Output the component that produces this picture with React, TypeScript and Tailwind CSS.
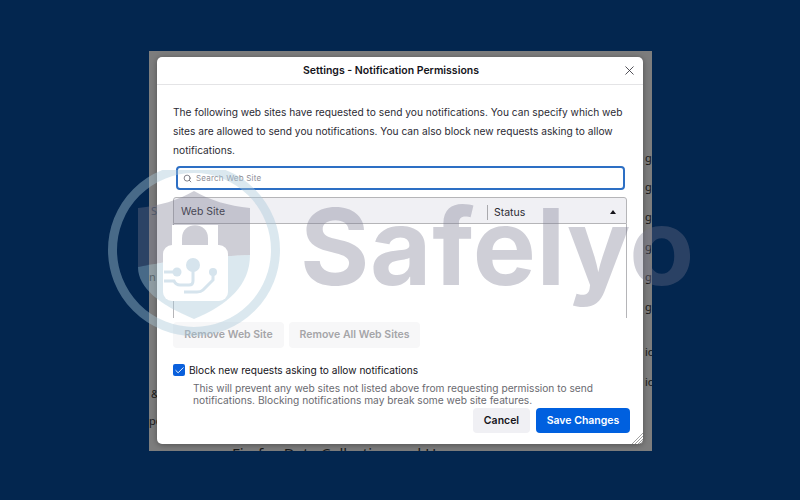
import { Check, Search, X } from "lucide-react";

const font = "font-['Inter','Noto_Sans',sans-serif]";

// clipped words of the page behind the dialog
const rightScraps = [
  { label: "g", y: "top-[100px]" },
  { label: "g", y: "top-[129px]" },
  { label: "g", y: "top-[159px]" },
  { label: "g", y: "top-[189px]" },
  { label: "g", y: "top-[219px]" },
  { label: "g", y: "top-[249px]" },
  { label: "io", y: "top-[294px]" },
  { label: "io", y: "top-[324px]" },
];

function BackdropText() {
  return (
    <div className="absolute inset-0 overflow-hidden text-[11px] leading-[14px] text-[#1a1a1a]">
      <span className="absolute left-[2px] top-[153px] text-[#3a4a5c]">S</span>
      <span className="absolute left-[0px] top-[219px]">n</span>
      <span className="absolute left-[2px] top-[336px]">&amp;</span>
      <span className="absolute left-[0px] top-[363px]">po</span>
      {rightScraps.map((s, i) => (
        <span key={i} className={`absolute left-[496px] ${s.y}`}>
          {s.label}
        </span>
      ))}
      <span className="absolute left-[83px] top-[393px] text-[15px] leading-[18px] whitespace-nowrap">
        Firefox Data Collection and Use
      </span>
    </div>
  );
}

function Watermark() {
  return (
    <div className="absolute inset-0 pointer-events-none overflow-hidden">
      <svg className="absolute left-[100px] top-[170px]" width="200" height="180" viewBox="0 0 200 180" fill="none">
        <circle cx="94" cy="80" r="81.5" stroke="#a9c8da" strokeOpacity="0.42" strokeWidth="9" />
        {/* shield, upper half */}
        <path d="M38 38 C60 36 78 30 94 21 C110 30 128 36 150 38 V85 C120 86 70 90 38 97 Z" fill="#76768c" fillOpacity="0.36" />
        {/* shield, lower half */}
        <path d="M38 97 C70 90 120 86 150 85 C150 115 128 135 94 149 C60 135 38 118 38 97 Z" fill="#a9c8da" fillOpacity="0.42" />
        {/* lock */}
        <path d="M72 77 V55 H118 V77 Z" fill="#ffffff" />
        <path d="M82 76 V68 C82 51 108 51 108 68 V76 Z" fill="#76768c" fillOpacity="0.36" />
        <rect x="63" y="75" width="65" height="56" rx="9" fill="#ffffff" />
        {/* circuit */}
        <circle cx="93" cy="95" r="7" fill="#d6e4ed" />
        <path d="M93 98 V111 Q93 115 89 115 H80 Q76 115 74 111 H64" stroke="#d6e4ed" strokeWidth="3" />
        <circle cx="77" cy="102" r="4.5" fill="#d6e4ed" />
        <path d="M64 102 H76" stroke="#d6e4ed" strokeWidth="3" />
        <circle cx="113" cy="102" r="4" fill="#d6e4ed" />
        <path d="M113 104 V110 L103 120 Q101 122 97 122 H84" stroke="#d6e4ed" strokeWidth="3" />
      </svg>
      <span
        className={`absolute left-[300px] top-[181px] text-[106px] leading-[132px] tracking-[0.6px] font-bold text-[#76768c]/35 whitespace-nowrap ${font}`}
      >
        Safelyo
      </span>
    </div>
  );
}

function ResizeGrip() {
  return (
    <svg className="absolute right-0 bottom-0" width="12" height="12" viewBox="0 0 12 12" stroke="#8a8a8a" strokeWidth="0.8">
      <path d="M1 12 L12 1 M4 12 L12 4 M7 12 L12 7 M10 12 L12 10" />
    </svg>
  );
}

function Dialog() {
  return (
    <div className={`relative w-[486px] h-[387px] bg-white rounded-[5px] shadow-[0_1px_6px_rgba(0,0,0,0.35)] flex flex-col text-[#15141a] ${font}`}>
      {/* Header */}
      <div className="h-[28px] shrink-0 border-b border-[#e4e4e6] flex items-center justify-center relative">
        <span className="text-[10.5px] font-semibold -translate-x-[9px]">Settings - Notification Permissions</span>
        <X size={15} strokeWidth={1.3} className="absolute right-[6px] top-[6px] text-[#2b2a33]" />
      </div>

      {/* Body */}
      <div className="flex-1 flex flex-col px-[16px] pt-[18px]">
        <p className="text-[10.2px] leading-[19px] text-[#2b2a33] w-[452px]">
          The following web sites have requested to send you notifications. You can specify which web sites are allowed
          to send you notifications. You can also block new requests asking to allow notifications.
        </p>

        <div className="mt-[6px] ml-[3px] w-[449px] h-[24px] border-2 border-[#2d6fc4] rounded-[4px] flex items-center gap-[4px] pl-[5px]">
          <Search size={9} strokeWidth={2} className="text-[#5b5b66]" />
          <span className="text-[8px] text-[#8d8d96] tracking-[0.2px]">Search Web Site</span>
        </div>

        {/* Table */}
        <div className="mt-[7px] w-[454px] h-[121px] flex flex-col">
          <div className="h-[27px] shrink-0 bg-[#f0f0f4] border border-[#b5b5b8] rounded-t-[3px] flex items-center pt-[3px] text-[10.5px] text-[#2b2a33]">
            <span className="w-[313px] pl-[7px]">Web Site</span>
            <span className="h-[15px] border-l border-[#a9a9ad] pl-[6px] leading-[15px] flex-1">Status</span>
            <span className="mr-[10px] w-0 h-0 border-x-[3.5px] border-x-transparent border-b-[4px] border-b-[#15141a]" />
          </div>
          <div className="flex-1 border-x border-[#b5b5b8]" />
        </div>

        <div className="mt-[4px] flex gap-[5px] text-[10.5px] font-semibold text-[#a5a5a8]">
          <button className="w-[111px] h-[26px] bg-[#f7f7f8] rounded-[4px]">Remove Web Site</button>
          <button className="w-[131px] h-[26px] bg-[#f7f7f8] rounded-[4px]">Remove All Web Sites</button>
        </div>

        <div className="mt-[15px] flex items-center gap-[4px]">
          <span className="size-[12px] bg-[#0a60dc] rounded-[2px] flex items-center justify-center">
            <Check size={11} strokeWidth={2} className="text-white" />
          </span>
          <span className="text-[10.15px] leading-[14px] text-[#15141a]">
            Block new requests asking to allow notifications
          </span>
        </div>

        <p className="mt-[5px] ml-[20px] w-[420px] text-[10.2px] leading-[12px] text-[#6a6a70]">
          This will prevent any web sites not listed above from requesting permission to send notifications. Blocking
          notifications may break some web site features.
        </p>
      </div>

      {/* Footer */}
      <div className="absolute right-[13px] bottom-[11px] flex gap-[6px] text-[10.5px] font-semibold">
        <button className="w-[57px] h-[25px] bg-[#f0f0f4] rounded-[4px] text-[#15141a]">Cancel</button>
        <button className="w-[94px] h-[25px] bg-[#0060df] rounded-[4px] text-white">Save Changes</button>
      </div>
      <ResizeGrip />
    </div>
  );
}

export default function App() {
  return (
    <div className="relative w-[800px] h-[500px] bg-[#03264f] overflow-hidden pl-[149px] pt-[51px]">
      <div className="relative w-[503px] h-[400px] bg-[#7d7d7d] pl-[8px] pt-[6px]">
        <BackdropText />
        <Dialog />
      </div>
      <Watermark />
    </div>
  );
}
